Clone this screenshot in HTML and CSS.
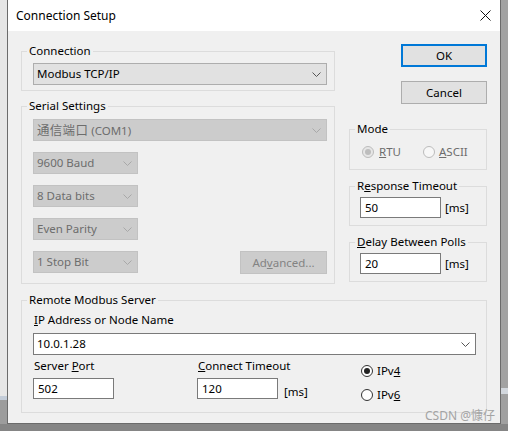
FILE: index.html
```html
<!DOCTYPE html>
<html>
<head>
<meta charset="utf-8">
<link rel="stylesheet" href="styles.css">
</head>
<body>
<div class="screen">
  <div class="side side-left"><div class="s-light"></div><div class="s-band"></div><div class="s-dark"></div></div>
  <div class="window">
    <div class="titlebar">
      <span class="title">Connection Setup</span>
      <svg class="close" width="11" height="11" viewBox="0 0 11 11"><path d="M0.5 0.5 L10.5 10.5 M10.5 0.5 L0.5 10.5" stroke="#111" stroke-width="1" fill="none"/></svg>
    </div>
    <div class="content">
      <div class="top">
        <div class="col-left">
          <fieldset class="group">
            <legend>Connection</legend>
            <div class="gbody conn-body">
              <div class="combo wide"><span>Modbus TCP/IP</span><svg class="chev" width="9" height="5" viewBox="0 0 9 5"><path d="M0.5 0.5 L4.5 4.5 L8.5 0.5" fill="none" stroke="#555" stroke-width="1"/></svg></div>
            </div>
          </fieldset>
          <fieldset class="group serial">
            <legend>Serial Settings</legend>
            <div class="gbody serial-body">
              <div class="combo wide disabled"><span><span class="cjk">通信端口</span> (COM1)</span><svg class="chev" width="9" height="5" viewBox="0 0 9 5"><path d="M0.5 0.5 L4.5 4.5 L8.5 0.5" fill="none" stroke="#a8a8a8" stroke-width="1"/></svg></div>
              <div class="combo small disabled"><span>9600 Baud</span><svg class="chev" width="9" height="5" viewBox="0 0 9 5"><path d="M0.5 0.5 L4.5 4.5 L8.5 0.5" fill="none" stroke="#a8a8a8" stroke-width="1"/></svg></div>
              <div class="combo small disabled"><span>8 Data bits</span><svg class="chev" width="9" height="5" viewBox="0 0 9 5"><path d="M0.5 0.5 L4.5 4.5 L8.5 0.5" fill="none" stroke="#a8a8a8" stroke-width="1"/></svg></div>
              <div class="combo small disabled"><span>Even Parity</span><svg class="chev" width="9" height="5" viewBox="0 0 9 5"><path d="M0.5 0.5 L4.5 4.5 L8.5 0.5" fill="none" stroke="#a8a8a8" stroke-width="1"/></svg></div>
              <div class="row-last">
                <div class="combo small disabled"><span>1 Stop Bit</span><svg class="chev" width="9" height="5" viewBox="0 0 9 5"><path d="M0.5 0.5 L4.5 4.5 L8.5 0.5" fill="none" stroke="#a8a8a8" stroke-width="1"/></svg></div>
                <div class="btn btn-disabled adv">Ad<u>v</u>anced...</div>
              </div>
            </div>
          </fieldset>
        </div>
        <div class="col-right">
          <div class="btn btn-default">OK</div>
          <div class="btn cancel">Cancel</div>
          <fieldset class="group mode">
            <legend>Mode</legend>
            <div class="gbody mode-body">
              <div class="radio disabled rtu"><span class="circle checked"></span><span><u>R</u>TU</span></div>
              <div class="radio disabled"><span class="circle"></span><span><u>A</u>SCII</span></div>
            </div>
          </fieldset>
          <fieldset class="group timeout">
            <legend>R<u>e</u>sponse Timeout</legend>
            <div class="gbody time-body">
              <div class="edit">50</div><span class="unit">[ms]</span>
            </div>
          </fieldset>
          <fieldset class="group timeout">
            <legend><u>D</u>elay Between Polls</legend>
            <div class="gbody time-body">
              <div class="edit">20</div><span class="unit">[ms]</span>
            </div>
          </fieldset>
        </div>
      </div>
      <fieldset class="group remote">
        <legend>Remote Modbus Server</legend>
        <div class="gbody remote-body">
          <div class="lbl"><u>I</u>P Address or Node Name</div>
          <div class="combo ipcombo"><span>10.0.1.28</span><svg class="chev" width="9" height="5" viewBox="0 0 9 5"><path d="M0.5 0.5 L4.5 4.5 L8.5 0.5" fill="none" stroke="#555" stroke-width="1"/></svg></div>
          <div class="bottom-row">
            <div class="field">
              <div class="lbl">Server <u>P</u>ort</div>
              <div class="edit">502</div>
            </div>
            <div class="field">
              <div class="lbl"><u>C</u>onnect Timeout</div>
              <div class="edit-row"><div class="edit">120</div><span class="unit unit2">[ms]</span></div>
            </div>
            <div class="radios">
              <div class="radio"><span class="circle on"></span><span>IPv<u>4</u></span></div>
              <div class="radio"><span class="circle"></span><span>IPv<u>6</u></span></div>
            </div>
          </div>
        </div>
      </fieldset>
    </div>
  </div>
  <div class="side side-right"><div class="r-top"></div><div class="r-band"></div><div class="r-bottom"></div></div>
  <div class="watermark">CSDN @<span class="cjk">慷仔</span></div>
</div>
<div class="bottom"></div>
</body>
</html>
```
FILE: styles.css
```css
html, body {
  margin: 0;
  padding: 0;
}
body {
  width: 508px;
  height: 431px;
  overflow: hidden;
  background: #858585;
  font-family: "Noto Sans", "Noto Sans CJK SC", sans-serif;
  font-size: 11.5px;
  color: #000;
}
.cjk {
  font-family: "Noto Sans CJK SC", sans-serif;
  font-size: 12.5px;
  letter-spacing: 0.3px;
}
u {
  text-decoration: underline;
  text-underline-offset: 1px;
  text-decoration-thickness: 1px;
}
.screen {
  position: relative;
  display: flex;
  height: 424px;
}
.side {
  width: 7px;
  display: flex;
  flex-direction: column;
}
.s-light { height: 396px; background: #e6e6e6; }
.s-band { height: 4px; background: #c3ccd8; }
.s-dark { flex: 1; background: #9c9c9c; }
.r-top { height: 388px; background: #a2a2a2; }
.r-band { height: 6px; background: #d2d7dd; }
.r-bottom { flex: 1; background: #a0a0a0; }
.window {
  width: 494px;
  height: 424px;
  box-sizing: border-box;
  border: 1px solid #6b6b6b;
  border-top: none;
  background: #f0f0f0;
  display: flex;
  flex-direction: column;
}
.titlebar {
  height: 31px;
  background: #fff;
  display: flex;
  align-items: center;
  padding-left: 8px;
}
.title {
  font-size: 12px;
  line-height: 16px;
}
.close {
  margin-left: auto;
  margin-right: 9px;
  display: block;
}
.content {
  padding: 13px 13px 0 13px;
}
.top {
  display: grid;
  grid-template-columns: 314px 138px;
  column-gap: 14px;
  align-items: start;
}
.col-left, .col-right {
  display: flex;
  flex-direction: column;
}
.group {
  margin: 0;
  padding: 0;
  min-width: 0;
  border: 1px solid #dcdcdc;
  box-sizing: border-box;
}
.group legend {
  margin-left: 5px;
  padding: 0 2px;
  line-height: 14px;
  font-size: 11.5px;
}
.gbody {
  display: flex;
}
.conn-body {
  padding: 5px 7px 5px 11px;
}
.serial {
  margin-top: 8px;
}
.serial-body {
  flex-direction: column;
  gap: 11px;
  padding: 6px 7px 9px 11px;
}
.combo {
  box-sizing: border-box;
  height: 22px;
  display: flex;
  align-items: center;
  justify-content: space-between;
  padding: 0 5px 0 3px;
  border: 1px solid #adadad;
  background: #e1e1e1;
  line-height: 14px;
}
.combo .chev {
  display: block;
  flex: none;
}
.combo.wide { width: 294px; }
.combo.small { width: 105px; }
.combo.disabled {
  background: #cccccc;
  border-color: #c2c2c2;
  color: #6d6d6d;
}
.row-last {
  display: flex;
  align-items: flex-start;
}
.btn {
  box-sizing: border-box;
  width: 86px;
  height: 23px;
  display: flex;
  align-items: center;
  justify-content: center;
  border: 1px solid #adadad;
  background: #e1e1e1;
  line-height: 14px;
}
.btn-default {
  border: 2px solid #0078d7;
  align-self: flex-end;
}
.cancel {
  margin-top: 14px;
  align-self: flex-end;
}
.adv {
  margin-left: auto;
  width: 87px;
}
.btn-disabled {
  background: #cccccc;
  border-color: #c2c2c2;
  color: #838383;
}
.mode {
  margin-top: 18px;
}
.mode-body {
  padding: 9px 0 10px 12px;
  align-items: center;
}
.radio {
  display: flex;
  align-items: center;
  height: 14px;
  line-height: 14px;
  gap: 4px;
}
.radio.rtu {
  width: 61px;
  gap: 5px;
}
.radio.disabled {
  color: #6d6d6d;
}
.circle {
  box-sizing: border-box;
  width: 12px;
  height: 12px;
  border-radius: 50%;
  border: 1px solid #333;
  background: #fff;
  display: flex;
  align-items: center;
  justify-content: center;
  flex: none;
}
.circle.on::after {
  content: "";
  width: 6px;
  height: 6px;
  border-radius: 50%;
  background: #222;
}
.radio.disabled .circle {
  border-color: #bcbcbc;
  background: #f7f7f7;
}
.radio.disabled .circle.checked {
  background: #e6e6e6;
}
.radio.disabled .circle.checked::after {
  content: "";
  width: 6px;
  height: 6px;
  border-radius: 50%;
  background: #bdbdbd;
}
.timeout {
  margin-top: 9px;
}
.time-body {
  padding: 4px 0 7px 10px;
  align-items: center;
}
.edit {
  box-sizing: border-box;
  width: 81px;
  height: 21px;
  border: 1px solid #7a7a7a;
  background: #fff;
  padding-left: 4px;
  display: flex;
  align-items: center;
  line-height: 14px;
}
.unit {
  margin-left: 4px;
  line-height: 14px;
}
.unit2 {
  margin-left: 6px;
}
.remote {
  margin-top: 9px;
}
.remote-body {
  flex-direction: column;
  padding: 6px 11px 10px 11px;
}
.lbl {
  line-height: 14px;
  padding-left: 1px;
}
.ipcombo {
  margin-top: 6px;
  width: 443px;
  background: #fff;
  border-color: #7a7a7a;
}
.bottom-row {
  display: grid;
  grid-template-columns: 164px 164px 1fr;
  margin-top: 4px;
}
.field .edit {
  margin-top: 5px;
}
.edit-row {
  display: flex;
  align-items: flex-end;
}
.edit-row .edit {
  margin-top: 5px;
}
.radios {
  display: flex;
  flex-direction: column;
  gap: 10px;
  padding-top: 5px;
}
.watermark {
  position: absolute;
  left: 425px;
  top: 407px;
  font-size: 12px;
  line-height: 16px;
  color: #a4a4a4;
}
.watermark .cjk {
  font-size: 12px;
  letter-spacing: 0;
}
.bottom {
  height: 7px;
  background: #858585;
}
```
